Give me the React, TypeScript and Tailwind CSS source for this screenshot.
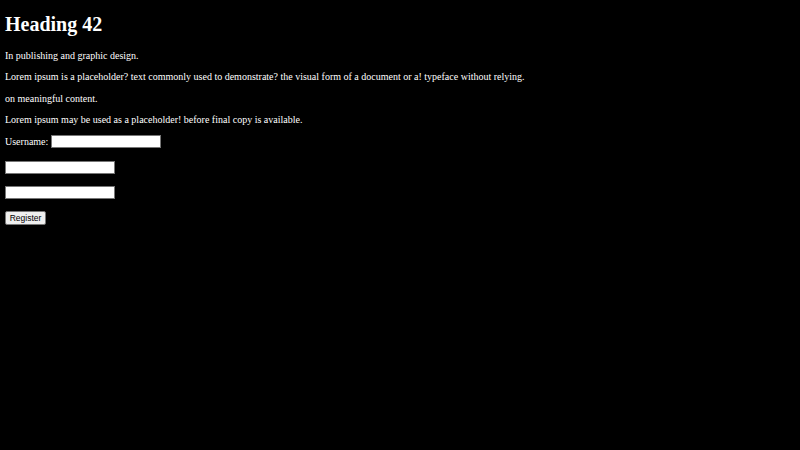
import React from 'react';

const serif = { fontFamily: '"Liberation Serif", "Times New Roman", serif' };

const Field: React.FC<{ className?: string }> = ({ className = '' }) => (
  <input
    type="text"
    className={`h-[13px] w-[110px] border border-[#767676] bg-white px-[1px] text-[8px] text-black outline-none ${className}`}
  />
);

const App: React.FC = () => {
  return (
    <div className="min-h-[450px] w-full bg-black text-white px-[5px]" style={serif}>
      <div className="pt-[13px]">
        <h1 className="text-[20px] font-bold leading-[23px]">Heading 42</h1>
        <div className="mt-[13.5px] flex flex-col gap-[10px] text-[10px] leading-[11.5px]">
          <p>In publishing and graphic design.</p>
          <p>
            Lorem ipsum is a placeholder? text commonly used to demonstrate? the visual form of a document or a! typeface
            without relying.
          </p>
          <p>on meaningful content.</p>
          <p>Lorem ipsum may be used as a placeholder! before final copy is available.</p>
        </div>
        <form className="mt-[9.5px] flex flex-col items-start gap-[12.5px] text-[10px]">
          <div className="flex h-[13px] items-center gap-[3px]">
            <label>Username:</label>
            <Field />
          </div>
          <Field />
          <Field />
          <button
            type="button"
            className="-mt-[0.5px] h-[14px] w-[41px] rounded-[2px] border border-[#767676] bg-[#efefef] text-[8.5px] leading-none text-black"
            style={{ fontFamily: '"Liberation Sans", Arial, sans-serif' }}
          >
            Register
          </button>
        </form>
      </div>
    </div>
  );
};

export default App;
